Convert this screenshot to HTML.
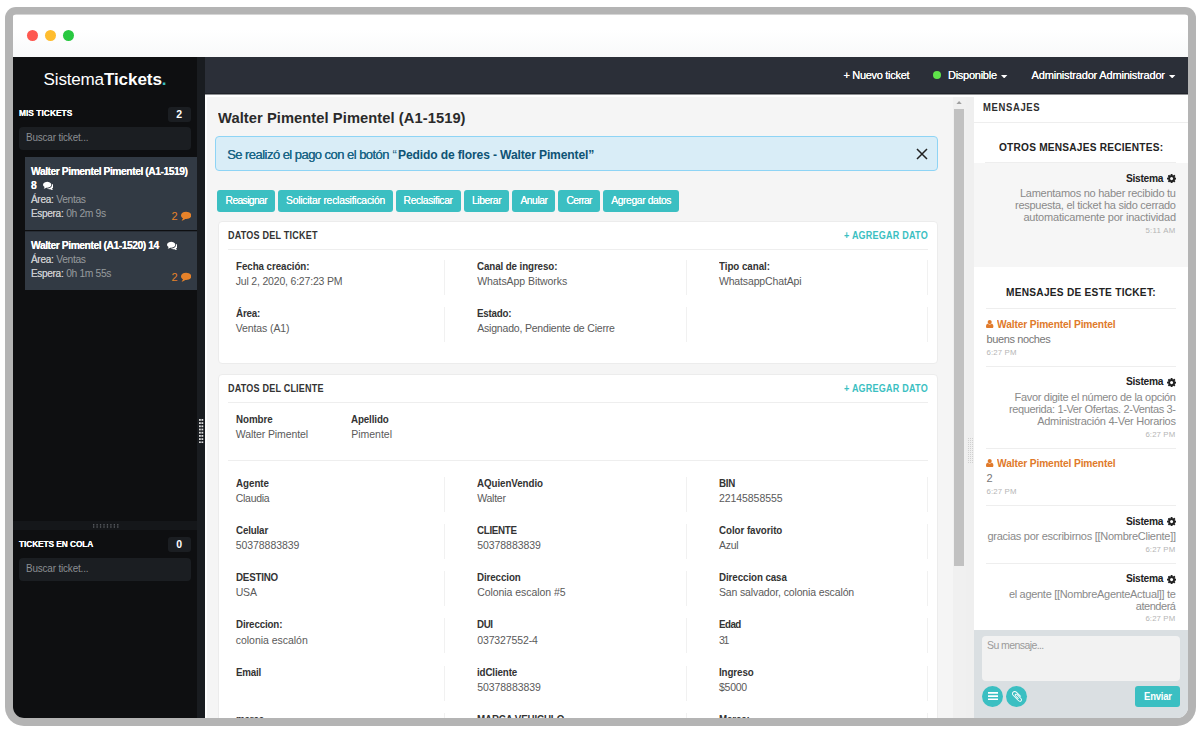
<!DOCTYPE html>
<html lang="es">
<head>
<meta charset="utf-8">
<title>SistemaTickets</title>
<style>
*{box-sizing:border-box;margin:0;padding:0}
html,body{width:1200px;height:732px;overflow:hidden;background:#fff}
body{font-family:"Liberation Sans",sans-serif;font-size:11px;color:#333;position:relative}
.abs{position:absolute}
.x{position:absolute;white-space:pre;transform-origin:0 50%}
.frame{left:5px;top:7px;width:1191px;height:718.5px;background:#b4b4b4;border-radius:11px 11px 19px 19px}
.inner{left:0;top:0;width:1200px;height:732px;clip-path:inset(14.5px 12px 14px 13px round 3px 3px 11px 11px);background:#f5f5f5}
.titlebar{left:13px;top:14.5px;width:1175px;height:42.5px;background:linear-gradient(#fff 35%,#f8f9fa)}
.dot{width:11px;height:11px;border-radius:50%;top:15.5px}
.sidewrap{left:13px;top:57px;width:192px;height:661px}
.sidebar{left:0;top:0;width:184px;height:661px;background:#0e0f11;color:#fff}
.vsplit{left:184px;top:0;width:8px;height:661px;background:#191c20}
/* ---- sidebar ---- */
.logo{left:0;top:13px;width:184px;text-align:center;font-size:17.1px;line-height:20px;color:#fff;letter-spacing:-.2px;white-space:nowrap}
.logo b{font-weight:700;letter-spacing:-.1px}
.logo i{font-style:normal;color:#3bbfc2;font-weight:700}
.shead{left:6px;font-size:9.5px;font-weight:700;color:#fff;letter-spacing:.04px;line-height:12px;white-space:nowrap;text-shadow:0 0 .6px #fff;transform:scaleX(.88);transform-origin:0 50%}
.badge{left:154.5px;width:23.5px;height:15px;border-radius:3px;background:#1b1e22;color:#fff;font-weight:700;font-size:10.5px;line-height:15px;text-align:center}
.search{left:6px;width:172px;height:22.5px;border-radius:4px;background:#1b1e22;color:#8b8e92;font-size:11px;line-height:20.5px;padding-left:6.5px;white-space:nowrap}
.sp{display:inline-block;transform:scaleX(.9);transform-origin:0 50%;letter-spacing:-.18px}
.tk{left:12px;width:172px;background:#323a44;color:#fff;font-size:10px;line-height:14px;padding:8.5px 0 0 6px;white-space:nowrap}
.tk>div{height:14.1px}
.tk svg{position:relative;top:0}
.tk .t{font-weight:700;font-size:10.3px;letter-spacing:-.45px;text-shadow:0 0 .6px #fff}
.tk .l{color:#c8cacc;letter-spacing:-.3px;text-shadow:0 0 .4px #c8cacc}
.tk .v{color:#979a9e;letter-spacing:-.35px;font-size:10.3px}
.tk .cnt{position:absolute;right:6px;color:#e6822a;font-size:11px;line-height:14px;letter-spacing:0}
.hsplit{left:0;top:464px;width:184px;height:8.5px;background:#15171a}
</style>
</head>
<body>
<div class="abs frame"></div>
<div class="abs inner">
  <div class="abs titlebar">
    <div class="abs dot" style="left:14px;background:#fe5850"></div>
    <div class="abs dot" style="left:32px;background:#febc2e"></div>
    <div class="abs dot" style="left:50px;background:#28c840"></div>
  </div>
  <div class="abs sidewrap">
    <div class="abs sidebar">
      <div class="abs logo">Sistema<b>Tickets</b><i>.</i></div>
      <div class="abs shead" style="top:50px;left:5.700px">MIS TICKETS</div>
      <div class="abs badge" style="top:50px">2</div>
      <div class="abs search" style="top:70px"><span class="sp">Buscar ticket...</span></div>
      <div class="abs tk" style="top:99.5px;height:73.5px">
        <div class="t">Walter Pimentel Pimentel (A1-1519)</div>
        <div class="t">8 <svg width="10.600" height="9" viewBox="0 128 1792 1536" style="margin-left:4px;vertical-align:-1px"><path fill="#fff" d="M1408 768q0 139-94 257t-256.500 186.500-353.500 68.500q-86 0-176-16-124 88-278 128-36 9-86 16h-3q-11 0-20.500-8t-11.500-21q-1-3-1-6.500t.5-6.500 2-6l2.500-5 3.500-5.500 4-5 4.500-5 4-4.500q5-6 23-25t26-29.500 22.500-29 25-38.500 20.500-44q-124-72-195-177t-71-224q0-139 94-257t256.500-186.500 353.500-68.500 353.500 68.500 256.500 186.500 94 257zm384 256q0 120-71 224.500t-195 176.500q10 24 20.500 44t25 38.500 22.500 29 26 29.500 23 25q1 1 4 4.500t4.500 5 4 5 3.500 5.500l2.500 5 2 6 .5 6.500-1 6.500q-3 14-13 22t-22 7q-50-7-86-16-154-40-278-128-90 16-176 16-271 0-472-132 58 4 88 4 161 0 309-45t264-129q125-92 192-212t67-254q0-77-23-152 129 71 204 178t75 230z"/></svg></div>
        <div><span class="l">Área:</span> <span class="v">Ventas</span></div>
        <div><span class="l">Espera:</span> <span class="v">0h 2m 9s</span></div>
        <div class="cnt" style="top:52px">2 <svg width="10.300" height="9.600" viewBox="0 128 1792 1664" style="vertical-align:-1.500px"><path fill="#e6822a" d="M1792 896q0 174-120 321.500t-326 233-450 85.500q-70 0-145-8-198 175-460 242-49 14-114 22-17 2-30.500-9t-17.500-29v-1q-3-4-.5-12t2-10 4.500-9.500l6-9 7-8.500 8-9q7-8 31-34.500t34.500-38 31-39.500 32.500-51 27-59 26-76q-157-89-247.500-220t-90.500-281q0-130 71-248.500t191-204.500 286-136.500 348-50.500q244 0 450 85.500t326 233 120 321.500z"/></svg></div>
      </div>
      <div class="abs tk" style="top:173.500px;height:59.5px;border-top:1px solid #272d35;padding-top:7.5px">
        <div class="t">Walter Pimentel (A1-1520) 14 <svg width="10.600" height="9" viewBox="0 128 1792 1536" style="margin-left:5.500px;vertical-align:-1px"><path fill="#fff" d="M1408 768q0 139-94 257t-256.500 186.500-353.500 68.500q-86 0-176-16-124 88-278 128-36 9-86 16h-3q-11 0-20.500-8t-11.500-21q-1-3-1-6.500t.5-6.500 2-6l2.500-5 3.500-5.500 4-5 4.500-5 4-4.500q5-6 23-25t26-29.500 22.500-29 25-38.500 20.500-44q-124-72-195-177t-71-224q0-139 94-257t256.500-186.500 353.500-68.500 353.500 68.500 256.500 186.500 94 257zm384 256q0 120-71 224.500t-195 176.500q10 24 20.500 44t25 38.500 22.500 29 26 29.500 23 25q1 1 4 4.500t4.500 5 4 5 3.500 5.500l2.500 5 2 6 .5 6.500-1 6.500q-3 14-13 22t-22 7q-50-7-86-16-154-40-278-128-90 16-176 16-271 0-472-132 58 4 88 4 161 0 309-45t264-129q125-92 192-212t67-254q0-77-23-152 129 71 204 178t75 230z"/></svg></div>
        <div><span class="l">Área:</span> <span class="v">Ventas</span></div>
        <div><span class="l">Espera:</span> <span class="v">0h 1m 55s</span></div>
        <div class="cnt" style="top:38px">2 <svg width="10.300" height="9.600" viewBox="0 128 1792 1664" style="vertical-align:-1.500px"><path fill="#e6822a" d="M1792 896q0 174-120 321.500t-326 233-450 85.500q-70 0-145-8-198 175-460 242-49 14-114 22-17 2-30.500-9t-17.500-29v-1q-3-4-.5-12t2-10 4.500-9.500l6-9 7-8.500 8-9q7-8 31-34.500t34.500-38 31-39.500 32.500-51 27-59 26-76q-157-89-247.500-220t-90.500-281q0-130 71-248.500t191-204.500 286-136.500 348-50.500q244 0 450 85.500t326 233 120 321.500z"/></svg></div>
      </div>
      <div class="abs hsplit"><svg class="abs" style="left:80px;top:3.200px" width="26" height="4" viewBox="0 0 26 4"><g fill="#54575c"><rect x="0.00" y="0" width="1.300" height="1.600"/><rect x="0.00" y="2.200" width="1.300" height="1.600"/><rect x="3.45" y="0" width="1.300" height="1.600"/><rect x="3.45" y="2.200" width="1.300" height="1.600"/><rect x="6.90" y="0" width="1.300" height="1.600"/><rect x="6.90" y="2.200" width="1.300" height="1.600"/><rect x="10.35" y="0" width="1.300" height="1.600"/><rect x="10.35" y="2.200" width="1.300" height="1.600"/><rect x="13.80" y="0" width="1.300" height="1.600"/><rect x="13.80" y="2.200" width="1.300" height="1.600"/><rect x="17.25" y="0" width="1.300" height="1.600"/><rect x="17.25" y="2.200" width="1.300" height="1.600"/><rect x="20.70" y="0" width="1.300" height="1.600"/><rect x="20.70" y="2.200" width="1.300" height="1.600"/><rect x="24.15" y="0" width="1.300" height="1.600"/><rect x="24.15" y="2.200" width="1.300" height="1.600"/></g></svg></div>
      <div class="abs shead" style="top:481px;left:6.400px;letter-spacing:-.11px">TICKETS EN COLA</div>
      <div class="abs badge" style="top:480px">0</div>
      <div class="abs search" style="top:501px"><span class="sp">Buscar ticket...</span></div>
    </div>
    <div class="abs vsplit"><svg class="abs" style="left:2.300px;top:361.900px" width="4.300" height="24.300" viewBox="0 0 4.300 24.300"><g fill="#dcdcdc"><rect x="0" y="0.0" width="1.800" height="1.800"/><rect x="2.450" y="0.0" width="1.800" height="1.800"/><rect x="0" y="3.2" width="1.800" height="1.800"/><rect x="2.450" y="3.2" width="1.800" height="1.800"/><rect x="0" y="6.4" width="1.800" height="1.800"/><rect x="2.450" y="6.4" width="1.800" height="1.800"/><rect x="0" y="9.6" width="1.800" height="1.800"/><rect x="2.450" y="9.6" width="1.800" height="1.800"/><rect x="0" y="12.8" width="1.800" height="1.800"/><rect x="2.450" y="12.8" width="1.800" height="1.800"/><rect x="0" y="16.0" width="1.800" height="1.800"/><rect x="2.450" y="16.0" width="1.800" height="1.800"/><rect x="0" y="19.2" width="1.800" height="1.800"/><rect x="2.450" y="19.2" width="1.800" height="1.800"/><rect x="0" y="22.4" width="1.800" height="1.800"/><rect x="2.450" y="22.4" width="1.800" height="1.800"/></g></svg></div>
  </div>
<!-- topbar -->
<div class="abs" style="left:205px;top:57px;width:983px;height:37px;background:#2b2f38"></div>
<div class="abs" style="left:205px;top:93px;width:983px;height:1px;background:#20232a"></div>
<div class="abs" style="left:205px;top:94px;width:983px;height:1px;background:#8f9194"></div>
<div class="abs" style="left:205px;top:95px;width:769.2px;height:2px;background:#fff"></div>
<div class="abs" style="left:205px;top:95px;width:1.5px;height:623px;background:#fff"></div>
<span class="x" style="left:843.50px;top:68.00px;font-size:11px;line-height:14px;letter-spacing:-0.309px;color:#fff;text-shadow:0 0 .5px #fff;">+ Nuevo ticket</span>
<div class="abs" style="left:932.8px;top:71px;width:8px;height:8px;background:#5fe34a;border-radius:50%"></div>
<span class="x" style="left:948.00px;top:68.00px;font-size:11px;line-height:14px;letter-spacing:-0.263px;color:#fff;text-shadow:0 0 .5px #fff;">Disponible</span>
<svg class="abs" style="left:1001.300px;top:74.800px" width="6.400" height="3.400" viewBox="0 0 7 4" preserveAspectRatio="none"><path d="M0 0h7L3.500 4z" fill="#fff"/></svg>
<span class="x" style="left:1031.60px;top:68.00px;font-size:11px;line-height:14px;letter-spacing:-0.183px;color:#fff;text-shadow:0 0 .5px #fff;">Administrador Administrador</span>
<svg class="abs" style="left:1169.300px;top:74.800px" width="6.400" height="3.400" viewBox="0 0 7 4" preserveAspectRatio="none"><path d="M0 0h7L3.500 4z" fill="#fff"/></svg>
<!-- main -->
<span class="x" style="left:217.50px;top:107.50px;font-size:15px;line-height:20px;letter-spacing:0.067px;font-weight:700;color:#2a2a2a;transform:scaleX(0.98);">Walter Pimentel Pimentel (A1-1519)</span>
<div class="abs" style="left:214.5px;top:136.2px;width:723.3px;height:35.1px;background:#d9edf7;border:1px solid #8ed4f5;border-radius:4px"></div>
<span class="x" style="left:227.20px;top:146.00px;font-size:13px;line-height:17px;letter-spacing:-0.540px;color:#1c6686;text-shadow:0 0 .4px #1c6686;">Se realizó el pago con el botón</span>
<span class="x" style="left:392.60px;top:146.00px;font-size:13px;line-height:17px;color:#1c6686;">“</span>
<span class="x" style="left:397.90px;top:146.00px;font-size:13px;line-height:17px;letter-spacing:-0.152px;font-weight:700;color:#0e5374;transform:scaleX(0.93);">Pedido de flores - Walter Pimentel”</span>
<svg class="abs" style="left:915.5px;top:148px" width="12" height="12" viewBox="0 0 12 12"><path d="M1 1l10 10M11 1L1 11" stroke="#222" stroke-width="1.500" fill="none"/></svg>
<div class="abs" style="left:217px;top:189.5px;width:58.2px;height:22.1px;background:#3bbfc2;border-radius:3px"></div>
<span class="x" style="left:225.60px;top:194.00px;font-size:10.3px;line-height:13px;letter-spacing:-0.621px;color:#fff;text-shadow:0 0 .4px #fff;">Reasignar</span>
<div class="abs" style="left:278px;top:189.5px;width:114.8px;height:22.1px;background:#3bbfc2;border-radius:3px"></div>
<span class="x" style="left:286.00px;top:194.00px;font-size:10.3px;line-height:13px;letter-spacing:-0.208px;color:#fff;text-shadow:0 0 .4px #fff;">Solicitar reclasificación</span>
<div class="abs" style="left:395.6px;top:189.5px;width:65.4px;height:22.1px;background:#3bbfc2;border-radius:3px"></div>
<span class="x" style="left:403.60px;top:194.00px;font-size:10.3px;line-height:13px;letter-spacing:-0.350px;color:#fff;text-shadow:0 0 .4px #fff;">Reclasificar</span>
<div class="abs" style="left:464.4px;top:189.5px;width:44.6px;height:22.1px;background:#3bbfc2;border-radius:3px"></div>
<span class="x" style="left:472.00px;top:194.00px;font-size:10.3px;line-height:13px;letter-spacing:-0.414px;color:#fff;text-shadow:0 0 .4px #fff;">Liberar</span>
<div class="abs" style="left:512.4px;top:189.5px;width:42.8px;height:22.1px;background:#3bbfc2;border-radius:3px"></div>
<span class="x" style="left:520.40px;top:194.00px;font-size:10.3px;line-height:13px;letter-spacing:-0.433px;color:#fff;text-shadow:0 0 .4px #fff;">Anular</span>
<div class="abs" style="left:558.2px;top:189.5px;width:41.8px;height:22.1px;background:#3bbfc2;border-radius:3px"></div>
<span class="x" style="left:566.60px;top:194.00px;font-size:10.3px;line-height:13px;letter-spacing:-0.680px;color:#fff;text-shadow:0 0 .4px #fff;">Cerrar</span>
<div class="abs" style="left:603px;top:189.5px;width:76.4px;height:22.1px;background:#3bbfc2;border-radius:3px"></div>
<span class="x" style="left:611.20px;top:194.00px;font-size:10.3px;line-height:13px;letter-spacing:-0.374px;color:#fff;text-shadow:0 0 .4px #fff;">Agregar datos</span>
<div class="abs" style="left:217.5px;top:220.5px;width:720.3px;height:143.8px;background:#fff;border:1px solid #ececec;border-radius:4px"></div>
<span class="x" style="left:227.50px;top:228.00px;font-size:10.5px;line-height:14px;letter-spacing:0.249px;font-weight:700;color:#333;transform:scaleX(0.86);">DATOS DEL TICKET</span>
<span class="x" style="left:844.30px;top:228.00px;font-size:10.5px;line-height:14px;letter-spacing:0.254px;font-weight:700;color:#3bbfc2;transform:scaleX(0.86);">+ AGREGAR DATO</span>
<div class="abs" style="left:227.5px;top:249px;width:700.2px;height:1px;background:#eee"></div>
<div class="abs" style="left:217.5px;top:373.7px;width:720.3px;height:366.3px;background:#fff;border:1px solid #ececec;border-radius:4px"></div>
<span class="x" style="left:227.50px;top:381.00px;font-size:10.5px;line-height:14px;letter-spacing:0.230px;font-weight:700;color:#333;transform:scaleX(0.86);">DATOS DEL CLIENTE</span>
<span class="x" style="left:844.30px;top:381.00px;font-size:10.5px;line-height:14px;letter-spacing:0.254px;font-weight:700;color:#3bbfc2;transform:scaleX(0.86);">+ AGREGAR DATO</span>
<div class="abs" style="left:227.5px;top:402.3px;width:700.2px;height:1px;background:#eee"></div>
<div class="abs" style="left:227.5px;top:460px;width:700.2px;height:1px;background:#eee"></div>
<div class="abs" style="left:443.7px;top:260px;width:1px;height:35px;background:#f1f1f1"></div>
<div class="abs" style="left:686px;top:260px;width:1px;height:35px;background:#f1f1f1"></div>
<div class="abs" style="left:927px;top:260px;width:1px;height:35px;background:#f1f1f1"></div>
<span class="x" style="left:235.75px;top:259.00px;font-size:10.5px;line-height:14px;letter-spacing:-0.066px;font-weight:700;color:#333;transform:scaleX(0.93);">Fecha creación:</span>
<span class="x" style="left:235.75px;top:274.00px;font-size:10.5px;line-height:14px;letter-spacing:-0.190px;color:#5a5a5a;">Jul 2, 2020, 6:27:23 PM</span>
<span class="x" style="left:477.20px;top:259.00px;font-size:10.5px;line-height:14px;letter-spacing:-0.103px;font-weight:700;color:#333;transform:scaleX(0.93);">Canal de ingreso:</span>
<span class="x" style="left:477.20px;top:274.00px;font-size:10.5px;line-height:14px;letter-spacing:-0.065px;color:#5a5a5a;">WhatsApp Bitworks</span>
<span class="x" style="left:718.90px;top:259.00px;font-size:10.5px;line-height:14px;letter-spacing:-0.039px;font-weight:700;color:#333;transform:scaleX(0.93);">Tipo canal:</span>
<span class="x" style="left:718.90px;top:274.00px;font-size:10.5px;line-height:14px;letter-spacing:-0.138px;color:#5a5a5a;">WhatsappChatApi</span>
<div class="abs" style="left:443.7px;top:307px;width:1px;height:35px;background:#f1f1f1"></div>
<div class="abs" style="left:686px;top:307px;width:1px;height:35px;background:#f1f1f1"></div>
<div class="abs" style="left:927px;top:307px;width:1px;height:35px;background:#f1f1f1"></div>
<span class="x" style="left:235.75px;top:306.00px;font-size:10.5px;line-height:14px;letter-spacing:-0.175px;font-weight:700;color:#333;transform:scaleX(0.93);">Área:</span>
<span class="x" style="left:235.75px;top:321.00px;font-size:10.5px;line-height:14px;letter-spacing:-0.111px;color:#5a5a5a;">Ventas (A1)</span>
<span class="x" style="left:477.20px;top:306.00px;font-size:10.5px;line-height:14px;letter-spacing:-0.249px;font-weight:700;color:#333;transform:scaleX(0.93);">Estado:</span>
<span class="x" style="left:477.20px;top:321.00px;font-size:10.5px;line-height:14px;letter-spacing:-0.190px;color:#5a5a5a;">Asignado, Pendiente de Cierre</span>
<span class="x" style="left:235.75px;top:412.00px;font-size:10.5px;line-height:14px;letter-spacing:-0.035px;font-weight:700;color:#333;transform:scaleX(0.93);">Nombre</span>
<span class="x" style="left:235.75px;top:427.00px;font-size:10.5px;line-height:14px;letter-spacing:-0.104px;color:#5a5a5a;">Walter Pimentel</span>
<span class="x" style="left:351.25px;top:412.00px;font-size:10.5px;line-height:14px;letter-spacing:-0.119px;font-weight:700;color:#333;transform:scaleX(0.93);">Apellido</span>
<span class="x" style="left:351.25px;top:427.00px;font-size:10.5px;line-height:14px;letter-spacing:-0.014px;color:#5a5a5a;">Pimentel</span>
<div class="abs" style="left:443.7px;top:476.7px;width:1px;height:35px;background:#f1f1f1"></div>
<div class="abs" style="left:686px;top:476.7px;width:1px;height:35px;background:#f1f1f1"></div>
<div class="abs" style="left:927px;top:476.7px;width:1px;height:35px;background:#f1f1f1"></div>
<span class="x" style="left:235.75px;top:476.00px;font-size:10.5px;line-height:14px;letter-spacing:-0.022px;font-weight:700;color:#333;transform:scaleX(0.93);">Agente</span>
<span class="x" style="left:235.75px;top:491.00px;font-size:10.5px;line-height:14px;letter-spacing:-0.275px;color:#5a5a5a;">Claudia</span>
<span class="x" style="left:477.20px;top:476.00px;font-size:10.5px;line-height:14px;letter-spacing:-0.073px;font-weight:700;color:#333;transform:scaleX(0.93);">AQuienVendio</span>
<span class="x" style="left:477.20px;top:491.00px;font-size:10.5px;line-height:14px;letter-spacing:-0.245px;color:#5a5a5a;">Walter</span>
<span class="x" style="left:718.90px;top:476.00px;font-size:10.5px;line-height:14px;letter-spacing:-0.267px;font-weight:700;color:#333;transform:scaleX(0.93);">BIN</span>
<span class="x" style="left:718.90px;top:491.00px;font-size:10.5px;line-height:14px;letter-spacing:-0.056px;color:#5a5a5a;">22145858555</span>
<div class="abs" style="left:443.7px;top:523.95px;width:1px;height:35px;background:#f1f1f1"></div>
<div class="abs" style="left:686px;top:523.95px;width:1px;height:35px;background:#f1f1f1"></div>
<div class="abs" style="left:927px;top:523.95px;width:1px;height:35px;background:#f1f1f1"></div>
<span class="x" style="left:235.75px;top:523.00px;font-size:10.5px;line-height:14px;letter-spacing:-0.162px;font-weight:700;color:#333;transform:scaleX(0.93);">Celular</span>
<span class="x" style="left:235.75px;top:538.00px;font-size:10.5px;line-height:14px;letter-spacing:-0.066px;color:#5a5a5a;">50378883839</span>
<span class="x" style="left:477.20px;top:523.00px;font-size:10.5px;line-height:14px;letter-spacing:-0.322px;font-weight:700;color:#333;transform:scaleX(0.93);">CLIENTE</span>
<span class="x" style="left:477.20px;top:538.00px;font-size:10.5px;line-height:14px;letter-spacing:-0.056px;color:#5a5a5a;">50378883839</span>
<span class="x" style="left:718.90px;top:523.00px;font-size:10.5px;line-height:14px;letter-spacing:-0.059px;font-weight:700;color:#333;transform:scaleX(0.93);">Color favorito</span>
<span class="x" style="left:718.90px;top:538.00px;font-size:10.5px;line-height:14px;letter-spacing:-0.241px;color:#5a5a5a;">Azul</span>
<div class="abs" style="left:443.7px;top:571.2px;width:1px;height:35px;background:#f1f1f1"></div>
<div class="abs" style="left:686px;top:571.2px;width:1px;height:35px;background:#f1f1f1"></div>
<div class="abs" style="left:927px;top:571.2px;width:1px;height:35px;background:#f1f1f1"></div>
<span class="x" style="left:235.75px;top:570.00px;font-size:10.5px;line-height:14px;letter-spacing:-0.216px;font-weight:700;color:#333;transform:scaleX(0.93);">DESTINO</span>
<span class="x" style="left:235.75px;top:585.00px;font-size:10.5px;line-height:14px;letter-spacing:-0.216px;color:#5a5a5a;">USA</span>
<span class="x" style="left:477.20px;top:570.00px;font-size:10.5px;line-height:14px;letter-spacing:-0.105px;font-weight:700;color:#333;transform:scaleX(0.93);">Direccion</span>
<span class="x" style="left:477.20px;top:585.00px;font-size:10.5px;line-height:14px;letter-spacing:-0.059px;color:#5a5a5a;">Colonia escalon #5</span>
<span class="x" style="left:718.90px;top:570.00px;font-size:10.5px;line-height:14px;letter-spacing:-0.086px;font-weight:700;color:#333;transform:scaleX(0.93);">Direccion casa</span>
<span class="x" style="left:718.90px;top:585.00px;font-size:10.5px;line-height:14px;letter-spacing:-0.129px;color:#5a5a5a;">San salvador, colonia escalón</span>
<div class="abs" style="left:443.7px;top:618.45px;width:1px;height:35px;background:#f1f1f1"></div>
<div class="abs" style="left:686px;top:618.45px;width:1px;height:35px;background:#f1f1f1"></div>
<div class="abs" style="left:927px;top:618.45px;width:1px;height:35px;background:#f1f1f1"></div>
<span class="x" style="left:235.75px;top:617.00px;font-size:10.5px;line-height:14px;letter-spacing:-0.161px;font-weight:700;color:#333;transform:scaleX(0.93);">Direccion:</span>
<span class="x" style="left:235.75px;top:633.00px;font-size:10.5px;line-height:14px;letter-spacing:-0.028px;color:#5a5a5a;">colonia escalón</span>
<span class="x" style="left:477.20px;top:617.00px;font-size:10.5px;line-height:14px;letter-spacing:-0.428px;font-weight:700;color:#333;transform:scaleX(0.93);">DUI</span>
<span class="x" style="left:477.20px;top:633.00px;font-size:10.5px;line-height:14px;letter-spacing:-0.120px;color:#5a5a5a;">037327552-4</span>
<span class="x" style="left:718.90px;top:617.00px;font-size:10.5px;line-height:14px;letter-spacing:-0.565px;font-weight:700;color:#333;transform:scaleX(0.93);">Edad</span>
<span class="x" style="left:718.90px;top:633.00px;font-size:10.5px;line-height:14px;letter-spacing:-1.355px;color:#5a5a5a;">31</span>
<div class="abs" style="left:443.7px;top:665.7px;width:1px;height:35px;background:#f1f1f1"></div>
<div class="abs" style="left:686px;top:665.7px;width:1px;height:35px;background:#f1f1f1"></div>
<div class="abs" style="left:927px;top:665.7px;width:1px;height:35px;background:#f1f1f1"></div>
<span class="x" style="left:235.75px;top:665.00px;font-size:10.5px;line-height:14px;letter-spacing:-0.235px;font-weight:700;color:#333;transform:scaleX(0.93);">Email</span>
<span class="x" style="left:477.20px;top:665.00px;font-size:10.5px;line-height:14px;letter-spacing:-0.129px;font-weight:700;color:#333;transform:scaleX(0.93);">idCliente</span>
<span class="x" style="left:477.20px;top:680.00px;font-size:10.5px;line-height:14px;letter-spacing:-0.056px;color:#5a5a5a;">50378883839</span>
<span class="x" style="left:718.90px;top:665.00px;font-size:10.5px;line-height:14px;letter-spacing:-0.099px;font-weight:700;color:#333;transform:scaleX(0.93);">Ingreso</span>
<span class="x" style="left:718.90px;top:680.00px;font-size:10.5px;line-height:14px;letter-spacing:-0.222px;color:#5a5a5a;">$5000</span>
<div class="abs" style="left:443.7px;top:712.95px;width:1px;height:35px;background:#f1f1f1"></div>
<div class="abs" style="left:686px;top:712.95px;width:1px;height:35px;background:#f1f1f1"></div>
<div class="abs" style="left:927px;top:712.95px;width:1px;height:35px;background:#f1f1f1"></div>
<span class="x" style="left:235.75px;top:712.00px;font-size:10.5px;line-height:14px;letter-spacing:-0.167px;font-weight:700;color:#333;transform:scaleX(0.93);">marca</span>
<span class="x" style="left:477.20px;top:712.00px;font-size:10.5px;line-height:14px;letter-spacing:-0.159px;font-weight:700;color:#333;transform:scaleX(0.93);">MARCA VEHICULO</span>
<span class="x" style="left:718.90px;top:712.00px;font-size:10.5px;line-height:14px;letter-spacing:-0.146px;font-weight:700;color:#333;transform:scaleX(0.93);">Marca:</span>
<div class="abs" style="left:952.8px;top:97px;width:12.9px;height:621px;background:#f0f0f0"></div>
<svg class="abs" style="left:956.300px;top:100.700px" width="6.200" height="3.500" viewBox="0 0 6 4" preserveAspectRatio="none"><path d="M0 4L3 0l3 4z" fill="#a0a0a0"/></svg>
<div class="abs" style="left:954.3px;top:109px;width:10.1px;height:457px;background:#c1c1c1"></div>
<div class="abs" style="left:965.7px;top:97px;width:8.5px;height:621px;background:#efefef"></div>
<!-- messages -->
<div class="abs" style="left:974.2px;top:95px;width:213.8px;height:535px;background:#fff"></div>
<span class="x" style="left:982.50px;top:100.00px;font-size:11px;line-height:14px;letter-spacing:0.759px;font-weight:700;color:#2e2e2e;transform:scaleX(0.86);">MENSAJES</span>
<div class="abs" style="left:974.2px;top:121.6px;width:213.8px;height:1px;background:#eee"></div>
<span class="x" style="left:999.30px;top:139.50px;font-size:11.5px;line-height:15px;letter-spacing:0.257px;font-weight:700;color:#222;transform:scaleX(0.88);">OTROS MENSAJES RECIENTES:</span>
<div class="abs" style="left:974.2px;top:162.8px;width:213.8px;height:104.7px;background:#f6f6f6"></div>
<div class="abs" style="left:985px;top:162.3px;width:191.4px;height:1px;background:#eeeeee"></div>
<span class="x" style="left:1126.10px;top:171.00px;font-size:11px;line-height:14px;letter-spacing:-0.311px;font-weight:700;color:#222;transform:scaleX(0.93);">Sistema</span>
<svg class="abs" style="left:1166.9px;top:174.1px" width="9.200" height="9.200" viewBox="128 128 1536 1536"><path fill="#222" d="M1152 896q0-106-75-181t-181-75-181 75-75 181 75 181 181 75 181-75 75-181zm512-109v222q0 12-8 23t-20 13l-185 28q-19 54-39 91 35 50 107 138 10 12 10 25t-9 23q-27 37-99 108t-94 71q-12 0-26-9l-138-108q-44 23-91 38-16 136-29 186-7 28-36 28h-222q-14 0-24.500-8.500t-11.500-21.500l-28-184q-49-16-90-37l-141 107q-10 9-25 9-14 0-25-11-126-114-165-168-7-10-7-23 0-12 8-23 15-21 51-66.500t54-70.500q-27-50-41-99l-183-27q-13-2-21-12.500t-8-23.500v-222q0-12 8-23t19-13l186-28q14-46 39-92-40-57-107-138-10-12-10-24 0-10 9-23 26-36 98.500-107.500t94.500-71.500q13 0 26 10l138 107q44-23 91-38 16-136 29-186 7-28 36-28h222q14 0 24.500 8.500t11.500 21.500l28 184q49 16 90 37l142-107q9-9 24-9 13 0 25 10 129 119 165 170 7 8 7 22 0 12-8 23-15 21-51 66.500t-54 70.500q26 50 41 98l183 28q13 2 21 12.500t8 23.500z"/></svg>
<span class="x" style="left:1020.00px;top:186.00px;font-size:11px;line-height:14px;letter-spacing:-0.263px;color:#8a8a8a;">Lamentamos no haber recibido tu</span>
<span class="x" style="left:1015.00px;top:198.00px;font-size:11px;line-height:14px;letter-spacing:-0.275px;color:#8a8a8a;">respuesta, el ticket ha sido cerrado</span>
<span class="x" style="left:1023.40px;top:210.00px;font-size:11px;line-height:14px;letter-spacing:-0.192px;color:#8a8a8a;">automaticamente por inactividad</span>
<span class="x" style="left:1145.40px;top:225.50px;font-size:7.8px;line-height:10px;letter-spacing:0.293px;color:#b5b5b5;">5:11 AM</span>
<span class="x" style="left:1006.30px;top:284.50px;font-size:11.5px;line-height:15px;letter-spacing:0.306px;font-weight:700;color:#222;transform:scaleX(0.88);">MENSAJES DE ESTE TICKET:</span>
<div class="abs" style="left:986px;top:308.1px;width:190.4px;height:1px;background:#eee"></div>
<svg class="abs" style="left:986.4px;top:319.8px" width="7.400" height="8.200" viewBox="192 128 1408 1536" preserveAspectRatio="none"><path fill="#e07a2b" d="M1600 1405q0 120-73 189.500t-194 69.500h-874q-121 0-194-69.500t-73-189.500q0-53 3.500-103.500t14-109 26.500-108.500 43-97.500 62-81 85.500-53.500 111.500-20q9 0 42 21.500t74.500 48 108 48 133.500 21.500 133.500-21.500 108-48 74.500-48 42-21.500q61 0 111.500 20t85.500 53.500 62 81 43 97.500 26.500 108.500 14 109 3.500 103.500zm-320-893q0 159-112.500 271.500t-271.500 112.500-271.500-112.500-112.500-271.500 112.500-271.500 271.500-112.500 271.500 112.500 112.500 271.500z"/></svg>
<span class="x" style="left:996.70px;top:317.00px;font-size:11px;line-height:14px;letter-spacing:-0.151px;font-weight:700;color:#e07a2b;transform:scaleX(0.93);">Walter Pimentel Pimentel</span>
<span class="x" style="left:986.60px;top:332.00px;font-size:11px;line-height:14px;letter-spacing:-0.398px;color:#777;">buens noches</span>
<span class="x" style="left:986.60px;top:347.50px;font-size:7.8px;line-height:10px;letter-spacing:0.124px;color:#b5b5b5;">6:27 PM</span>
<div class="abs" style="left:986px;top:366px;width:190.4px;height:1px;background:#eee"></div>
<span class="x" style="left:1126.10px;top:374.00px;font-size:11px;line-height:14px;letter-spacing:-0.311px;font-weight:700;color:#222;transform:scaleX(0.93);">Sistema</span>
<svg class="abs" style="left:1166.9px;top:377.5px" width="9.200" height="9.200" viewBox="128 128 1536 1536"><path fill="#222" d="M1152 896q0-106-75-181t-181-75-181 75-75 181 75 181 181 75 181-75 75-181zm512-109v222q0 12-8 23t-20 13l-185 28q-19 54-39 91 35 50 107 138 10 12 10 25t-9 23q-27 37-99 108t-94 71q-12 0-26-9l-138-108q-44 23-91 38-16 136-29 186-7 28-36 28h-222q-14 0-24.500-8.500t-11.500-21.500l-28-184q-49-16-90-37l-141 107q-10 9-25 9-14 0-25-11-126-114-165-168-7-10-7-23 0-12 8-23 15-21 51-66.500t54-70.500q-27-50-41-99l-183-27q-13-2-21-12.500t-8-23.500v-222q0-12 8-23t19-13l186-28q14-46 39-92-40-57-107-138-10-12-10-24 0-10 9-23 26-36 98.500-107.500t94.500-71.500q13 0 26 10l138 107q44-23 91-38 16-136 29-186 7-28 36-28h222q14 0 24.500 8.500t11.500 21.500l28 184q49 16 90 37l142-107q9-9 24-9 13 0 25 10 129 119 165 170 7 8 7 22 0 12-8 23-15 21-51 66.500t-54 70.500q26 50 41 98l183 28q13 2 21 12.500t8 23.500z"/></svg>
<span class="x" style="left:1014.50px;top:390.00px;font-size:11px;line-height:14px;letter-spacing:-0.304px;color:#8a8a8a;">Favor digite el número de la opción</span>
<span class="x" style="left:1008.90px;top:402.00px;font-size:11px;line-height:14px;letter-spacing:-0.369px;color:#8a8a8a;">requerida: 1-Ver Ofertas. 2-Ventas 3-</span>
<span class="x" style="left:1037.20px;top:414.00px;font-size:11px;line-height:14px;letter-spacing:-0.262px;color:#8a8a8a;">Administración 4-Ver Horarios</span>
<span class="x" style="left:1145.40px;top:429.50px;font-size:7.8px;line-height:10px;letter-spacing:0.124px;color:#b5b5b5;">6:27 PM</span>
<div class="abs" style="left:986px;top:447.5px;width:190.4px;height:1px;background:#eee"></div>
<svg class="abs" style="left:986.4px;top:459.3px" width="7.400" height="8.200" viewBox="192 128 1408 1536" preserveAspectRatio="none"><path fill="#e07a2b" d="M1600 1405q0 120-73 189.500t-194 69.500h-874q-121 0-194-69.500t-73-189.500q0-53 3.500-103.500t14-109 26.500-108.500 43-97.500 62-81 85.500-53.500 111.500-20q9 0 42 21.500t74.500 48 108 48 133.500 21.500 133.500-21.500 108-48 74.500-48 42-21.500q61 0 111.500 20t85.500 53.500 62 81 43 97.500 26.500 108.500 14 109 3.500 103.500zm-320-893q0 159-112.500 271.500t-271.500 112.500-271.500-112.500-112.500-271.500 112.500-271.500 271.500-112.500 271.500 112.500 112.500 271.500z"/></svg>
<span class="x" style="left:996.70px;top:456.00px;font-size:11px;line-height:14px;letter-spacing:-0.151px;font-weight:700;color:#e07a2b;transform:scaleX(0.93);">Walter Pimentel Pimentel</span>
<span class="x" style="left:986.60px;top:471.00px;font-size:11px;line-height:14px;color:#777;">2</span>
<span class="x" style="left:986.60px;top:486.50px;font-size:7.8px;line-height:10px;letter-spacing:0.124px;color:#b5b5b5;">6:27 PM</span>
<div class="abs" style="left:986px;top:505.4px;width:190.4px;height:1px;background:#eee"></div>
<span class="x" style="left:1126.10px;top:514.00px;font-size:11px;line-height:14px;letter-spacing:-0.311px;font-weight:700;color:#222;transform:scaleX(0.93);">Sistema</span>
<svg class="abs" style="left:1166.9px;top:516.9px" width="9.200" height="9.200" viewBox="128 128 1536 1536"><path fill="#222" d="M1152 896q0-106-75-181t-181-75-181 75-75 181 75 181 181 75 181-75 75-181zm512-109v222q0 12-8 23t-20 13l-185 28q-19 54-39 91 35 50 107 138 10 12 10 25t-9 23q-27 37-99 108t-94 71q-12 0-26-9l-138-108q-44 23-91 38-16 136-29 186-7 28-36 28h-222q-14 0-24.500-8.500t-11.500-21.500l-28-184q-49-16-90-37l-141 107q-10 9-25 9-14 0-25-11-126-114-165-168-7-10-7-23 0-12 8-23 15-21 51-66.500t54-70.500q-27-50-41-99l-183-27q-13-2-21-12.500t-8-23.500v-222q0-12 8-23t19-13l186-28q14-46 39-92-40-57-107-138-10-12-10-24 0-10 9-23 26-36 98.500-107.500t94.500-71.500q13 0 26 10l138 107q44-23 91-38 16-136 29-186 7-28 36-28h222q14 0 24.500 8.500t11.500 21.500l28 184q49 16 90 37l142-107q9-9 24-9 13 0 25 10 129 119 165 170 7 8 7 22 0 12-8 23-15 21-51 66.500t-54 70.500q26 50 41 98l183 28q13 2 21 12.500t8 23.500z"/></svg>
<span class="x" style="left:987.50px;top:529.00px;font-size:11px;line-height:14px;letter-spacing:-0.270px;color:#8a8a8a;">gracias por escribirnos [[NombreCliente]]</span>
<span class="x" style="left:1145.40px;top:544.50px;font-size:7.8px;line-height:10px;letter-spacing:0.124px;color:#b5b5b5;">6:27 PM</span>
<div class="abs" style="left:986px;top:563px;width:190.4px;height:1px;background:#eee"></div>
<span class="x" style="left:1126.10px;top:571.00px;font-size:11px;line-height:14px;letter-spacing:-0.311px;font-weight:700;color:#222;transform:scaleX(0.93);">Sistema</span>
<svg class="abs" style="left:1166.9px;top:574.7px" width="9.200" height="9.200" viewBox="128 128 1536 1536"><path fill="#222" d="M1152 896q0-106-75-181t-181-75-181 75-75 181 75 181 181 75 181-75 75-181zm512-109v222q0 12-8 23t-20 13l-185 28q-19 54-39 91 35 50 107 138 10 12 10 25t-9 23q-27 37-99 108t-94 71q-12 0-26-9l-138-108q-44 23-91 38-16 136-29 186-7 28-36 28h-222q-14 0-24.500-8.500t-11.500-21.500l-28-184q-49-16-90-37l-141 107q-10 9-25 9-14 0-25-11-126-114-165-168-7-10-7-23 0-12 8-23 15-21 51-66.500t54-70.500q-27-50-41-99l-183-27q-13-2-21-12.500t-8-23.500v-222q0-12 8-23t19-13l186-28q14-46 39-92-40-57-107-138-10-12-10-24 0-10 9-23 26-36 98.500-107.500t94.500-71.500q13 0 26 10l138 107q44-23 91-38 16-136 29-186 7-28 36-28h222q14 0 24.500 8.500t11.500 21.500l28 184q49 16 90 37l142-107q9-9 24-9 13 0 25 10 129 119 165 170 7 8 7 22 0 12-8 23-15 21-51 66.500t-54 70.500q26 50 41 98l183 28q13 2 21 12.500t8 23.500z"/></svg>
<span class="x" style="left:1008.90px;top:587.00px;font-size:11px;line-height:14px;letter-spacing:-0.301px;color:#8a8a8a;">el agente [[NombreAgenteActual]] te</span>
<span class="x" style="left:1135.80px;top:599.00px;font-size:11px;line-height:14px;letter-spacing:-0.464px;color:#8a8a8a;">atenderá</span>
<span class="x" style="left:1145.40px;top:613.50px;font-size:7.8px;line-height:10px;letter-spacing:0.124px;color:#b5b5b5;">6:27 PM</span>
<svg class="abs" style="left:967.500px;top:438px" width="6" height="26" viewBox="0 0 6 26"><g fill="#d0d0d0"><rect x="0" y="0" width="1" height="1"/><rect x="2" y="0" width="1" height="1"/><rect x="4" y="0" width="1" height="1"/><rect x="0" y="2" width="1" height="1"/><rect x="2" y="2" width="1" height="1"/><rect x="4" y="2" width="1" height="1"/><rect x="0" y="4" width="1" height="1"/><rect x="2" y="4" width="1" height="1"/><rect x="4" y="4" width="1" height="1"/><rect x="0" y="6" width="1" height="1"/><rect x="2" y="6" width="1" height="1"/><rect x="4" y="6" width="1" height="1"/><rect x="0" y="8" width="1" height="1"/><rect x="2" y="8" width="1" height="1"/><rect x="4" y="8" width="1" height="1"/><rect x="0" y="10" width="1" height="1"/><rect x="2" y="10" width="1" height="1"/><rect x="4" y="10" width="1" height="1"/><rect x="0" y="12" width="1" height="1"/><rect x="2" y="12" width="1" height="1"/><rect x="4" y="12" width="1" height="1"/><rect x="0" y="14" width="1" height="1"/><rect x="2" y="14" width="1" height="1"/><rect x="4" y="14" width="1" height="1"/><rect x="0" y="16" width="1" height="1"/><rect x="2" y="16" width="1" height="1"/><rect x="4" y="16" width="1" height="1"/><rect x="0" y="18" width="1" height="1"/><rect x="2" y="18" width="1" height="1"/><rect x="4" y="18" width="1" height="1"/><rect x="0" y="20" width="1" height="1"/><rect x="2" y="20" width="1" height="1"/><rect x="4" y="20" width="1" height="1"/><rect x="0" y="22" width="1" height="1"/><rect x="2" y="22" width="1" height="1"/><rect x="4" y="22" width="1" height="1"/><rect x="0" y="24" width="1" height="1"/><rect x="2" y="24" width="1" height="1"/><rect x="4" y="24" width="1" height="1"/></g></svg>
<div class="abs" style="left:974.2px;top:630px;width:213.8px;height:88px;background:#dadfe2"></div>
<div class="abs" style="left:982px;top:636.4px;width:197.8px;height:44.9px;background:#f2f2f2;border-radius:4px"></div>
<span class="x" style="left:987.10px;top:638.00px;font-size:10.5px;line-height:14px;letter-spacing:-0.584px;color:#9a9a9a;">Su mensaje...</span>
<div class="abs" style="left:982px;top:685.9px;width:20.9px;height:20.9px;background:#3bbfc2;border-radius:50%"></div>
<svg class="abs" style="left:987.800px;top:691.600px" width="10.500" height="8.400" viewBox="0 0 10.500 8.400"><path d="M0 .9h10.500M0 4.200h10.500M0 7.500h10.500" stroke="#fff" stroke-width="1.800"/></svg>
<div class="abs" style="left:1006.2px;top:685.9px;width:20.9px;height:20.9px;background:#3bbfc2;border-radius:50%"></div>
<svg class="abs" style="left:1011.700px;top:691.200px" width="10" height="10.800" viewBox="196 132 1400 1528"><path fill="#fff" d="M1596 1385q0 117-79 196t-196 79q-135 0-235-100l-777-776q-113-115-113-271 0-159 110-270t269-111q158 0 273 113l605 606q10 10 10 22 0 16-30.500 46.500t-46.500 30.500q-13 0-23-10l-606-607q-79-77-181-77-106 0-179 75t-73 181q0 105 76 181l776 777q63 63 145 63 64 0 106-42t42-106q0-82-63-145l-581-581q-26-24-60-24-29 0-48 19t-19 48q0 32 25 59l410 410q10 10 10 22 0 16-31 47t-47 31q-12 0-22-10l-410-410q-63-61-63-149 0-82 57-139t139-57q88 0 149 63l581 581q100 98 100 235z"/></svg>
<div class="abs" style="left:1135.1px;top:686.2px;width:44.7px;height:20.6px;background:#3bbfc2;border-radius:3px"></div>
<span class="x" style="left:1143.70px;top:689.00px;font-size:10.5px;line-height:14px;letter-spacing:-0.193px;font-weight:700;color:#fff;transform:scaleX(0.9);">Enviar</span>
</div>
</body>
</html>
